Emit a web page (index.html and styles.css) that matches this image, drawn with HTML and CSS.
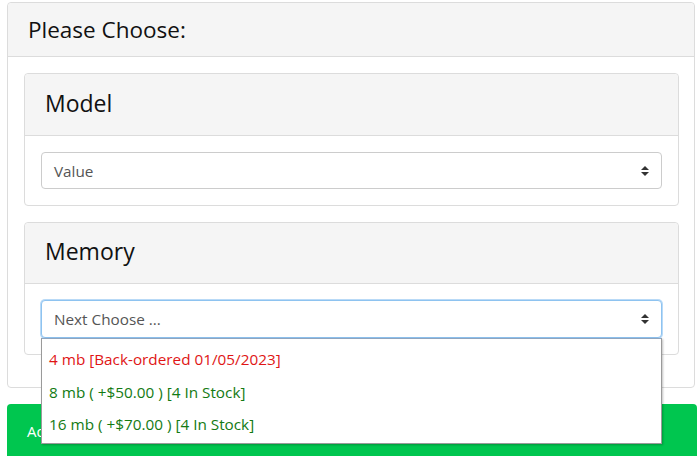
FILE: index.html
```html
<!DOCTYPE html>
<html>
<head>
<meta charset="utf-8">
<link rel="stylesheet" href="styles.css">
</head>
<body>
<div class="page">
  <div class="panel outer">
    <div class="panel-heading outer-heading">Please Choose:</div>
    <div class="panel-body outer-body">
      <div class="panel inner">
        <div class="panel-heading inner-heading">Model</div>
        <div class="panel-body inner-body">
          <div class="select">
            <span class="select-text">Value</span>
            <svg class="arrows" width="8" height="12" viewBox="0 0 8 12"><path d="M0 5 L4 1 L8 5 Z M0 7 L4 11 L8 7 Z" fill="#333"/></svg>
          </div>
        </div>
      </div>
      <div class="panel inner memory">
        <div class="panel-heading inner-heading">Memory</div>
        <div class="panel-body inner-body">
          <div class="select-wrap">
            <div class="select focused">
              <span class="select-text">Next Choose ...</span>
              <svg class="arrows" width="8" height="12" viewBox="0 0 8 12"><path d="M0 5 L4 1 L8 5 Z M0 7 L4 11 L8 7 Z" fill="#333"/></svg>
            </div>
            <ul class="dropdown">
              <li class="opt back">4 mb [Back-ordered 01/05/2023]</li>
              <li class="opt stock">8 mb ( +$50.00 ) [4 In Stock]</li>
              <li class="opt stock">16 mb ( +$70.00 ) [4 In Stock]</li>
            </ul>
          </div>
        </div>
      </div>
    </div>
  </div>
  <div class="add-btn">Add to Cart</div>
</div>
</body>
</html>
```

FILE: styles.css
```css
* { box-sizing: border-box; }
html, body { margin: 0; padding: 0; background: #fff; }
body {
  font-family: "Open Sans", "Noto Sans", "Liberation Sans", sans-serif;
  color: #111;
  width: 700px;
  height: 456px;
  overflow: hidden;
}
.page {
  padding: 2px 5px 0 7px;
}
.panel {
  border: 1px solid #dcdcdc;
  border-radius: 4px;
  background: #fff;
}
.panel-heading {
  background: #f5f5f5;
  border-bottom: 1px solid #dcdcdc;
  border-radius: 4px 4px 0 0;
  color: #111;
}
.outer-heading {
  height: 54px;
  padding: 0 20px;
  display: flex;
  align-items: center;
  font-size: 22.5px;
  letter-spacing: 0;
}
.outer-body {
  padding: 16px 15px 32px 16px;
  display: flex;
  flex-direction: column;
  gap: 16px;
}
.inner-heading {
  height: 62px;
  padding: 0 20px 4px 20px;
  display: flex;
  align-items: center;
  font-size: 23px;
  letter-spacing: 0;
}
.memory .inner-heading { height: 61px; }
.inner-body {
  padding: 16px 16px 16px 16px;
}
.select-wrap { position: relative; }
.select {
  height: 37px;
  border: 1px solid #ccc;
  border-radius: 4px;
  display: flex;
  align-items: center;
  justify-content: space-between;
  padding: 0 12px 0 12px;
  font-size: 15.3px;
  color: #555;
  background: #fff;
}
.select.focused {
  height: 38px;
  border-color: #8ec3f0;
  box-shadow: 0 0 0 1px #b9daf7;
}
.arrows { display: block; }
.dropdown {
  position: absolute;
  left: 0;
  right: 0;
  top: 38px;
  margin: 0;
  padding: 4px 0 2px 0;
  list-style: none;
  background: #fff;
  border: 1px solid #9a9a9a;
  border-top: 1px solid #8fa5bf;
  box-shadow: 1px 1px 2px rgba(0,0,0,0.25);
  z-index: 5;
}
.opt {
  height: 32.5px;
  padding: 0 7px;
  display: flex;
  align-items: center;
  font-size: 15.3px;
}
.back { color: #e01515; }
.stock { color: #137a13; }
.add-btn {
  margin-top: 16px;
  height: 60px;
  background: #00c64f;
  border-radius: 4px 4px 0 0;
  color: #fff;
  font-size: 15px;
  padding: 17px 20px;
  margin-right: -2px;
}
```
